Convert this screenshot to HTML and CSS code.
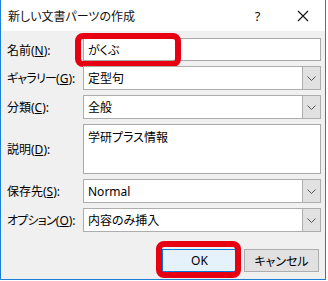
FILE: index.html
```html
<!DOCTYPE html>
<html lang="ja">
<head>
  <meta charset="UTF-8" />
  <title>新しい文書パーツの作成</title>
  <link rel="stylesheet" href="styles.css">
</head>
<body>
  <div class="dialog">
    <div class="titlebar">
      <span class="title">新しい文書パーツの作成</span>
      <span class="cap">?</span>
      <span class="cap">
        <svg width="12" height="12" viewBox="0 0 12 12"><path d="M1 1L11 11M11 1L1 11" stroke="#111" stroke-width="1.1" fill="none"/></svg>
      </span>
    </div>

    <div class="content">
      <div class="form">
        <label>名前(<u>N</u>):</label>
        <div class="field text marked">がくぶ</div>

        <label><span class="kana">ギャラリー</span>(<u>G</u>):</label>
        <div class="field combo"><span class="val">定型句</span><span class="arrow"><svg width="9" height="5" viewBox="0 0 9 5"><path d="M0.5 0.5L4.5 4.5L8.5 0.5" stroke="#555" fill="none"/></svg></span></div>

        <label>分類(<u>C</u>):</label>
        <div class="field combo"><span class="val">全般</span><span class="arrow"><svg width="9" height="5" viewBox="0 0 9 5"><path d="M0.5 0.5L4.5 4.5L8.5 0.5" stroke="#555" fill="none"/></svg></span></div>

        <label>説明(<u>D</u>):</label>
        <div class="field text area">学研プラス情報</div>

        <label>保存先(<u>S</u>):</label>
        <div class="field combo"><span class="val">Normal</span><span class="arrow"><svg width="9" height="5" viewBox="0 0 9 5"><path d="M0.5 0.5L4.5 4.5L8.5 0.5" stroke="#555" fill="none"/></svg></span></div>

        <label><span class="kana">オプション</span>(<u>O</u>):</label>
        <div class="field combo"><span class="val">内容のみ挿入</span><span class="arrow"><svg width="9" height="5" viewBox="0 0 9 5"><path d="M0.5 0.5L4.5 4.5L8.5 0.5" stroke="#555" fill="none"/></svg></span></div>
      </div>

      <div class="buttons">
        <button class="btn default marked-ok">OK</button>
        <button class="btn">キャンセル</button>
      </div>
    </div>
  </div>
</body>
</html>
```

FILE: styles.css
```css
*, *::after {
  margin: 0;
  padding: 0;
  box-sizing: border-box;
  font-family: 'Noto Sans', 'Noto Sans CJK JP', sans-serif;
  font-feature-settings: "palt";
}
html, body {
  background: #fff;
  color: #000;
}

.dialog {
  width: 326px;
  height: 280px;
  border: 1px solid #1a80d6;
  border-top: none;
  background: #f0f0f0;
  display: flex;
  flex-direction: column;
}

/* Title bar */
.titlebar {
  height: 31px;
  background: #fff;
  display: flex;
  align-items: center;
}
.title {
  flex: 1;
  padding-left: 7px;
  font-size: 12px;
  color: #111;
}
.cap {
  width: 45px;
  height: 31px;
  display: flex;
  align-items: center;
  justify-content: center;
  font-size: 13px;
  color: #111;
}

/* Form */
.content {
  padding: 7px 3px 0 6px;
}
.form {
  display: grid;
  grid-template-columns: 76px 238px;
  grid-template-rows: 23px 24px 24px 50px 24px 24px;
  row-gap: 5px;
  align-items: center;
}
.form label {
  font-size: 12px;
  white-space: nowrap;
}
.form .kana {
  letter-spacing: -0.8px;
}
.form u {
  text-decoration-thickness: 1px;
  text-underline-offset: 1px;
}
.field {
  height: 100%;
  background: #fff;
  border: 1px solid #a9a9a9;
  font-size: 12px;
  position: relative;
}
.text {
  padding: 2px 4px;
  display: flex;
  align-items: center;
}
.area {
  align-items: flex-start;
  padding-top: 3px;
}
.combo {
  display: flex;
  border-color: #adadad;
}
.combo .val {
  flex: 1;
  padding-left: 4px;
  display: flex;
  align-items: center;
}
.combo .arrow {
  width: 18px;
  background: #e1e1e1;
  border-left: 1px solid #adadad;
  display: flex;
  align-items: center;
  justify-content: center;
}

/* Buttons */
.buttons {
  margin-top: 17px;
  display: flex;
  justify-content: flex-end;
  gap: 7px;
  padding-right: 3px;
}
.btn {
  width: 75px;
  height: 23px;
  background: #e1e1e1;
  border: 1px solid #adadad;
  font-size: 12px;
  color: #000;
  position: relative;
}
.btn.default {
  background: #e5f1fb;
  border-color: #0078d7;
}

/* Red annotation boxes */
.marked::after,
.marked-ok::after {
  content: "";
  position: absolute;
  border: 6px solid #e60012;
  border-radius: 8px;
}
.marked::after {
  left: -9px;
  top: -6px;
  width: 106px;
  height: 34px;
}
.marked-ok::after {
  left: -7px;
  top: -9px;
  width: 85px;
  height: 37px;
}
```
